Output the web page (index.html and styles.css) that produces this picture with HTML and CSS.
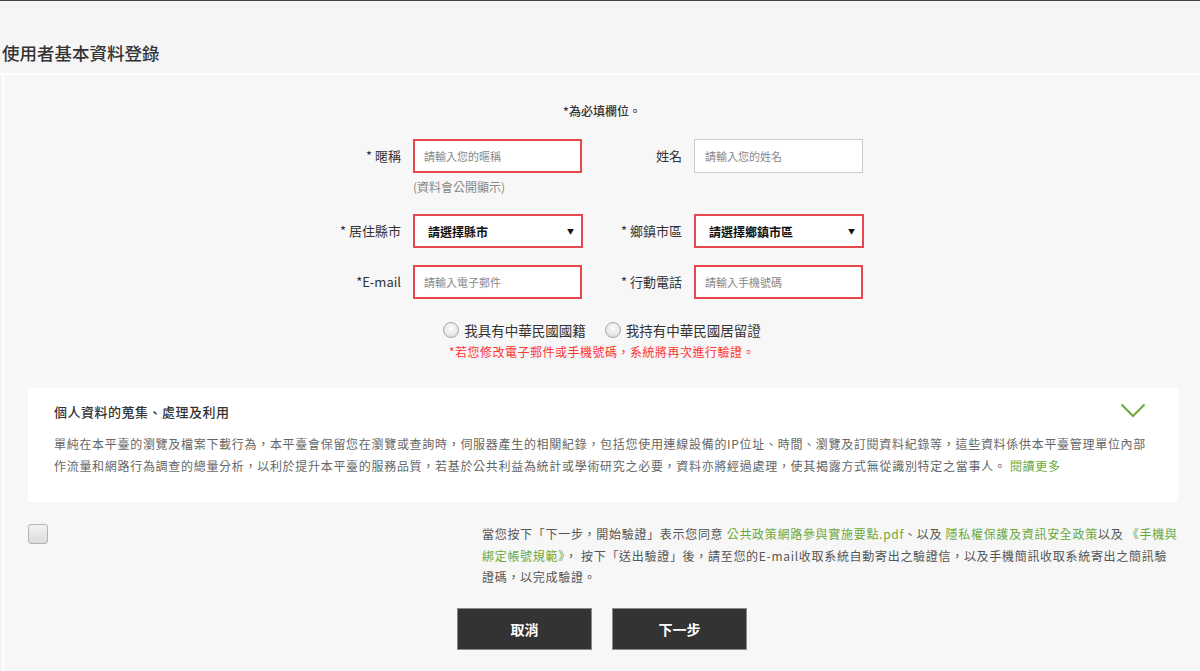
FILE: index.html
```html
<!DOCTYPE html>
<html lang="zh-Hant">
<head>
<meta charset="utf-8">
<title>使用者基本資料登錄</title>
<link rel="stylesheet" href="styles.css">
</head>
<body>
<div class="topbar"></div>
<header class="page-head">
  <h1 class="page-title">使用者基本資料登錄</h1>
</header>
<main class="panel">
  <p class="required-note">*為必填欄位。</p>

  <div class="form-grid">
    <label class="field-label">* 暱稱</label>
    <div class="field-cell">
      <input class="text-input is-error" type="text" placeholder="請輸入您的暱稱">
      <div class="hint">(資料會公開顯示)</div>
    </div>
    <label class="field-label">姓名</label>
    <div class="field-cell">
      <input class="text-input" type="text" placeholder="請輸入您的姓名">
    </div>

    <label class="field-label">* 居住縣市</label>
    <div class="field-cell">
      <div class="select-box is-error"><span>請選擇縣市</span><span class="caret">▼</span></div>
    </div>
    <label class="field-label">* 鄉鎮市區</label>
    <div class="field-cell">
      <div class="select-box is-error"><span>請選擇鄉鎮市區</span><span class="caret">▼</span></div>
    </div>

    <label class="field-label">*E-mail</label>
    <div class="field-cell">
      <input class="text-input is-error" type="text" placeholder="請輸入電子郵件">
    </div>
    <label class="field-label">* 行動電話</label>
    <div class="field-cell">
      <input class="text-input is-error" type="text" placeholder="請輸入手機號碼">
    </div>
  </div>

  <div class="radio-row">
    <label class="radio-item"><span class="radio-dot"></span>我具有中華民國國籍</label>
    <label class="radio-item"><span class="radio-dot"></span>我持有中華民國居留證</label>
  </div>
  <p class="warn-note">*若您修改電子郵件或手機號碼，系統將再次進行驗證。</p>

  <section class="info-box">
    <h2 class="info-title">個人資料的蒐集、處理及利用</h2>
    <svg class="chevron" width="26" height="15" viewBox="0 0 26 15"><polyline points="1.5,1.5 13,13 24.5,1.5" fill="none" stroke="#6aa83c" stroke-width="2"/></svg>
    <p class="info-body">單純在本平臺的瀏覽及檔案下載行為，本平臺會保留您在瀏覽或查詢時，伺服器產生的相關紀錄，包括您使用連線設備的IP位址、時間、瀏覽及訂閱資料紀錄等，這些資料係供本平臺管理單位內部<br>作流量和網路行為調查的總量分析，以利於提升本平臺的服務品質，若基於公共利益為統計或學術研究之必要，資料亦將經過處理，使其揭露方式無從識別特定之當事人。 <a class="link" href="#">閱讀更多</a></p>
  </section>

  <div class="agree-row">
    <span class="check-box"></span>
    <p class="agree-text">當您按下「下一步，開始驗證」表示您同意 <a class="link" href="#">公共政策網路參與實施要點.pdf</a>、以及 <a class="link" href="#">隱私權保護及資訊安全政策</a>以及 <a class="link" href="#">《手機與<br>綁定帳號規範》</a>， 按下「送出驗證」後，請至您的E-mail收取系統自動寄出之驗證信，以及手機簡訊收取系統寄出之簡訊驗<br>證碼，以完成驗證。</p>
  </div>

  <div class="btn-row">
    <button class="btn" type="button">取消</button>
    <button class="btn" type="button">下一步</button>
  </div>
</main>
</body>
</html>
```

FILE: styles.css
```css
* { box-sizing: border-box; }

html, body {
  margin: 0;
  padding: 0;
  background: #f5f5f5;
  font-family: "Noto Sans CJK TC", "Noto Sans", sans-serif;
  color: #333;
  overflow: hidden;
}

.topbar {
  height: 1px;
  background: #444;
}

.page-head {
  padding: 40px 0 8px 2px;
  border-bottom: 2px solid #fff;
}

.page-title {
  margin: 0;
  font-size: 17.5px;
  line-height: 24px;
  font-weight: 500;
  color: #333;
}

.panel {
  margin-left: 2px;
  border-left: 2px solid #fff;
  background: #f7f7f7;
  padding-top: 27px;
  min-height: 600px;
}

.required-note {
  margin: 0;
  text-align: center;
  font-size: 12px;
  line-height: 18px;
  color: #333;
  font-weight: 500;
}

.form-grid {
  margin: 19px 0 0 297px;
  display: grid;
  grid-template-columns: 112px 170px 111px 170px;
  row-gap: 17px;
  align-items: start;
}

.field-label {
  height: 34px;
  line-height: 34px;
  text-align: right;
  padding-right: 12px;
  font-size: 13px;
  color: #333;
  font-weight: 400;
  white-space: nowrap;
}

.field-cell {
  display: flex;
  flex-direction: column;
}

.text-input {
  width: 169px;
  height: 34px;
  border: 1px solid #ccc;
  background: #fff;
  padding: 0 10px;
  font-family: inherit;
  font-size: 11px;
  color: #333;
  outline: none;
  border-radius: 0;
}

.text-input::placeholder {
  color: #888;
}

.text-input.is-error {
  border: 2px solid #e8474d;
  padding: 0 9px;
}

.hint {
  margin-top: 4px;
  line-height: 20px;
  font-size: 12px;
  color: #888;
}

.select-box {
  width: 170px;
  height: 34px;
  background: #fff;
  border: 2px solid #e8474d;
  display: flex;
  align-items: center;
  justify-content: space-between;
  padding: 0 7px 0 13px;
  font-size: 12px;
  font-weight: 700;
  color: #111;
}

.caret {
  font-size: 7px;
  color: #111;
}

.radio-row {
  margin-top: 21px;
  display: flex;
  justify-content: center;
  gap: 19px;
  padding-left: 0;
}

.radio-item {
  display: flex;
  align-items: center;
  gap: 5px;
  font-size: 13.5px;
  line-height: 20px;
  color: #333;
}

.radio-dot {
  width: 16px;
  height: 16px;
  border-radius: 50%;
  border: 1px solid #a9a9a9;
  background: radial-gradient(circle at 50% 40%, #fdfdfd 0%, #e6e6e6 60%, #d2d2d2 100%);
}

.warn-note {
  margin: 4px 0 0;
  text-align: center;
  font-size: 12px;
  letter-spacing: 0.5px;
  line-height: 16px;
  color: #ff3333;
}

.info-box {
  position: relative;
  margin: 28px 22px 0 24px;
  background: #fff;
  padding: 14px 26px 25px;
}

.info-title {
  margin: 0;
  font-size: 13px;
  letter-spacing: 0.5px;
  line-height: 20px;
  font-weight: 500;
  color: #333;
}

.chevron {
  position: absolute;
  top: 15px;
  right: 32px;
}

.info-body {
  margin: 11px 0 0;
  font-size: 12px;
  letter-spacing: 0.7px;
  line-height: 22px;
  color: #666;
  white-space: nowrap;
}

.link {
  color: #6aa83c;
  text-decoration: none;
}

.agree-row {
  margin: 21px 22px 0 24px;
  display: flex;
  justify-content: space-between;
  align-items: flex-start;
}

.check-box {
  margin-top: 1px;
  width: 20px;
  height: 20px;
  border: 1px solid #b4b4b4;
  border-radius: 3px;
  background: linear-gradient(#f2f2f2, #dcdcdc);
}

.agree-text {
  margin: 0;
  width: 696px;
  font-size: 12px;
  letter-spacing: 0.7px;
  line-height: 21.5px;
  color: #555;
  white-space: nowrap;
}

.btn-row {
  margin-top: 20px;
  display: flex;
  justify-content: center;
  gap: 20px;
}

.btn {
  width: 135px;
  height: 42px;
  background: #333;
  border: 1px solid #8a8a8a;
  color: #fff;
  font-family: inherit;
  font-size: 14px;
  font-weight: 700;
  cursor: pointer;
}
```
